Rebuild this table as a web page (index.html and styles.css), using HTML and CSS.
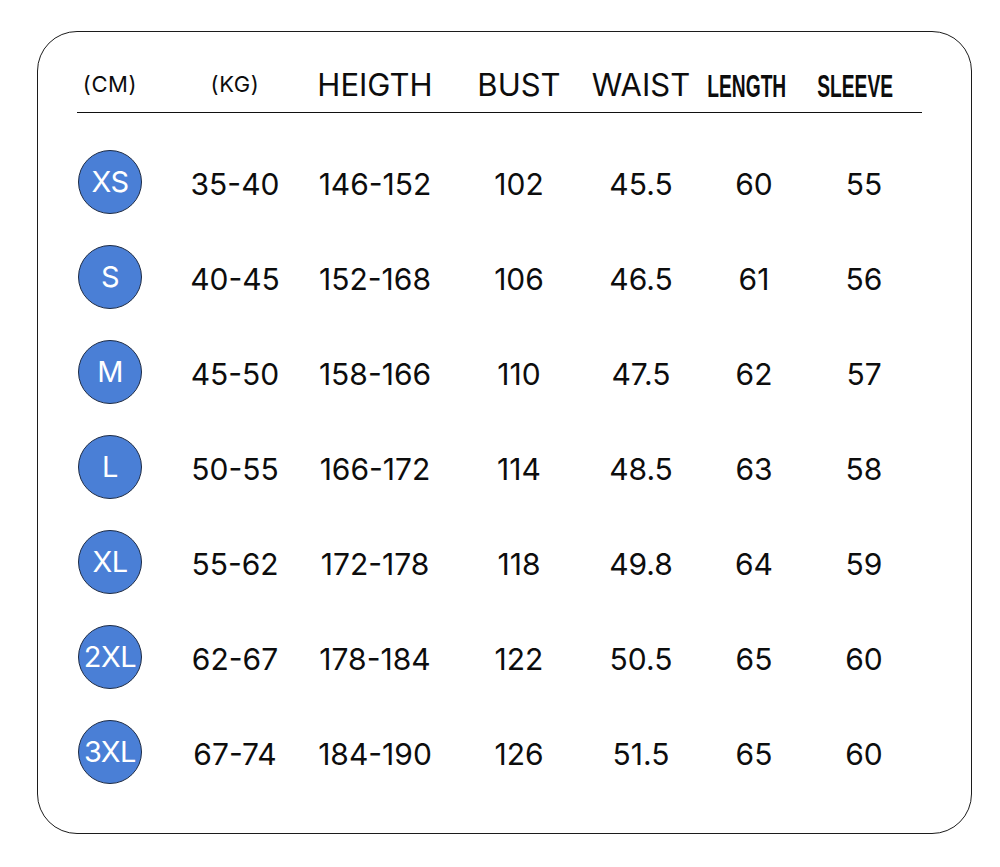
FILE: index.html
```html
<!DOCTYPE html>
<html>
<head>
<meta charset="utf-8">
<link rel="stylesheet" href="styles.css">
</head>
<body>
<div class="card">
  <div class="grid head">
    <div class="h small">(CM)</div>
    <div class="h small">(KG)</div>
    <div class="h">HEIGTH</div>
    <div class="h">BUST</div>
    <div class="h">WAIST</div>
    <div class="h cond len"><span>LENGTH</span></div>
    <div class="h cond slv"><span>SLEEVE</span></div>
  </div>
  <div class="rule"></div>
  <div class="grid row"><div class="c"><span class="dot">XS</span></div><div class="c">35-40</div><div class="c">146-152</div><div class="c">102</div><div class="c">45.5</div><div class="c">60</div><div class="c">55</div></div>
  <div class="grid row"><div class="c"><span class="dot">S</span></div><div class="c">40-45</div><div class="c">152-168</div><div class="c">106</div><div class="c">46.5</div><div class="c">61</div><div class="c">56</div></div>
  <div class="grid row"><div class="c"><span class="dot">M</span></div><div class="c">45-50</div><div class="c">158-166</div><div class="c">110</div><div class="c">47.5</div><div class="c">62</div><div class="c">57</div></div>
  <div class="grid row"><div class="c"><span class="dot">L</span></div><div class="c">50-55</div><div class="c">166-172</div><div class="c">114</div><div class="c">48.5</div><div class="c">63</div><div class="c">58</div></div>
  <div class="grid row"><div class="c"><span class="dot">XL</span></div><div class="c">55-62</div><div class="c">172-178</div><div class="c">118</div><div class="c">49.8</div><div class="c">64</div><div class="c">59</div></div>
  <div class="grid row"><div class="c"><span class="dot">2XL</span></div><div class="c">62-67</div><div class="c">178-184</div><div class="c">122</div><div class="c">50.5</div><div class="c">65</div><div class="c">60</div></div>
  <div class="grid row"><div class="c"><span class="dot">3XL</span></div><div class="c">67-74</div><div class="c">184-190</div><div class="c">126</div><div class="c">51.5</div><div class="c">65</div><div class="c">60</div></div>
</div>
</body>
</html>
```
FILE: styles.css
```css
html, body {
  margin: 0;
  padding: 0;
  background: #fff;
}
body {
  font-family: Inter, "Noto Sans", sans-serif;
  color: #0d0d0d;
}
.card {
  box-sizing: border-box;
  margin: 31px 0 0 37px;
  width: 935px;
  height: 803px;
  border: 1px solid #1c1c1c;
  border-radius: 40px;
  padding: 26px 0 0 12px;
}
.grid {
  display: grid;
  grid-template-columns: 120px 130px 150px 138px 106px 120px 100px;
  align-items: center;
}
.head {
  height: 52px;
  margin-bottom: 2px;
}
.h {
  text-align: center;
  font-size: 31px;
  font-weight: 400;
}
.h.small {
  font-size: 22px;
  font-weight: 400;
  letter-spacing: 0.6px;
}
.h.cond {
  display: flex;
  justify-content: center;
}
.h.cond span {
  display: block;
  flex: none;
  font-family: "Liberation Sans", Arial, sans-serif;
  font-weight: 700;
  font-size: 32px;
  transform: scaleX(0.6);
  transform-origin: center;
  margin-top: 4px;
}
.h.len { padding-right: 14px; }
.h.slv { padding-right: 18px; }
.rule {
  height: 1px;
  background: #111;
  margin-left: 27px;
  width: 845px;
  margin-bottom: 21px;
}
.row {
  height: 95px;
}
.c {
  text-align: center;
  font-size: 30px;
  font-weight: 400;
  padding-top: 4px;
}
.c:first-child {
  padding-top: 0;
}
.dot {
  display: inline-flex;
  align-items: center;
  justify-content: center;
  box-sizing: border-box;
  width: 64px;
  height: 64px;
  border-radius: 50%;
  background: #4a7fd6;
  border: 1px solid #1d2b45;
  color: #fff;
  font-size: 29px;
  letter-spacing: -0.5px;
}
```
